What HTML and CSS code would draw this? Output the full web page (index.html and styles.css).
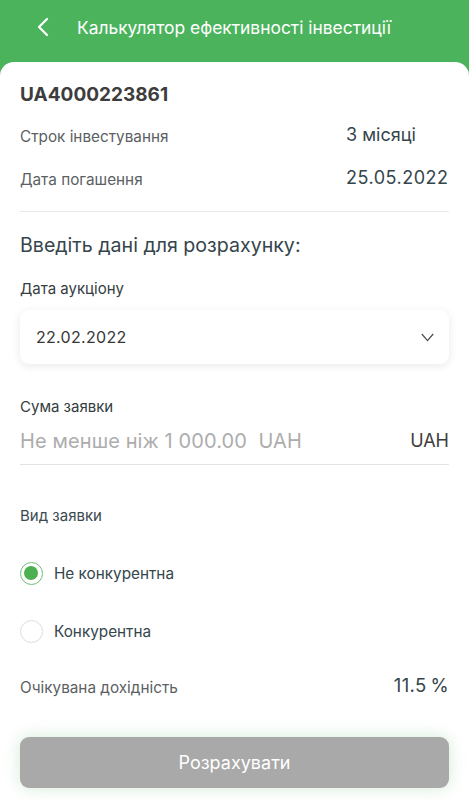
FILE: index.html
```html
<!DOCTYPE html>
<html lang="uk">
<head>
<meta charset="utf-8">
<title>Калькулятор ефективності інвестиції</title>
<link rel="stylesheet" href="styles.css">
</head>
<body>
<header class="topbar">
  <svg class="back" width="14" height="20" viewBox="0 0 14 20"><path d="M11 2 L3 10 L11 18" fill="none" stroke="#fff" stroke-width="2.2" stroke-linecap="round" stroke-linejoin="round"/></svg>
  <h1 class="title">Калькулятор ефективності інвестиції</h1>
</header>
<main class="card">
  <div class="code">UA4000223861</div>
  <div class="info-row"><span class="label">Строк інвестування</span><span class="value">3 місяці</span></div>
  <div class="info-row"><span class="label">Дата погашення</span><span class="value date">25.05.2022</span></div>
  <div class="divider"></div>
  <h2 class="section">Введіть дані для розрахунку:</h2>
  <div class="field-label first">Дата аукціону</div>
  <div class="select">
    <span class="select-value">22.02.2022</span>
    <svg width="13" height="9" viewBox="0 0 13 9"><path d="M0.8 1 L6.5 7.6 L12.2 1" fill="none" stroke="#4a4a4a" stroke-width="1.2"/></svg>
  </div>
  <div class="field-label sum">Сума заявки</div>
  <div class="input-row"><span class="placeholder">Не менше ніж 1 000.00&nbsp; UAH</span><span class="cur">UAH</span></div>
  <div class="field-label kind">Вид заявки</div>
  <div class="radio-row"><span class="radio checked"></span><span class="radio-text">Не конкурентна</span></div>
  <div class="radio-row"><span class="radio"></span><span class="radio-text">Конкурентна</span></div>
  <div class="yield-row"><span class="label">Очікувана дохідність</span><span class="yield">11.5&#8201;%</span></div>
  <button class="btn">Розрахувати</button>
</main>
</body>
</html>
```
FILE: styles.css
```css
html, body {
  margin: 0;
  padding: 0;
}
body {
  background: #4cb35d;
  font-family: Inter, "Noto Sans", sans-serif;
  width: 469px;
  height: 800px;
  overflow: hidden;
}
.topbar {
  height: 62px;
  display: flex;
  align-items: center;
  padding-left: 36px;
  box-sizing: border-box;
  padding-bottom: 8px;
}
.back { flex: none; }
.title {
  margin: 0 0 0 27px;
  font-size: 17.4px;
  font-weight: 400;
  color: #fff;
}
.card {
  background: #fff;
  border-radius: 14px 14px 0 0;
  height: 738px;
  box-sizing: border-box;
  padding: 21px 20px 0;
  display: flex;
  flex-direction: column;
}
.code {
  line-height: 24px;
  font-size: 19px;
  font-weight: 700;
  color: #3d3d3d;
}
.info-row {
  display: flex;
  align-items: center;
  height: 43px;
}
.code + .info-row { margin-top: 7.5px; }
.label {
  font-size: 15.3px;
  color: #5b6062;
  flex: 1;
}
.value {
  width: 103px;
  font-size: 18px;
  color: #34454b;
  margin-top: -4px;
}
.value.date { letter-spacing: 0.5px; }
.divider {
  margin-top: 10.5px;
  height: 1px;
  background: #e8e8e8;
}
.section {
  margin: 20px 0 0;
  font-size: 19.6px;
  font-weight: 400;
  line-height: 26px;
  color: #34454b;
}
.field-label {
  font-size: 15px;
  line-height: 20px;
  color: #353d40;
}
.field-label.first { margin-top: 21px; }
.field-label.sum { margin-top: 33px; }
.field-label.kind { margin-top: 41px; color: #3b4a4f; }
.select {
  margin-top: 11px;
  height: 54px;
  border-radius: 9px;
  box-shadow: 0 2px 10px rgba(0, 0, 0, 0.09);
  display: flex;
  align-items: center;
  justify-content: space-between;
  padding: 0 15px 0 16px;
  font-size: 16px;
  color: #363636;
}
.select-value { letter-spacing: 0.3px; }
.input-row {
  height: 47px;
  border-bottom: 1px solid #e3e3e3;
  display: flex;
  align-items: center;
  justify-content: space-between;
  font-size: 20px;
}
.placeholder { color: #adadad; letter-spacing: 0.1px; }
.cur { color: #3d3d3d; font-size: 18px; }
.radio-row {
  height: 58px;
  display: flex;
  align-items: center;
}
.kind + .radio-row { margin-top: 18px; }
.radio {
  width: 23px;
  height: 23px;
  border-radius: 50%;
  border: 1px solid #ddd;
  box-sizing: border-box;
  position: relative;
  flex: none;
}
.radio.checked {
  border: 1.5px solid #6fbf78;
}
.radio.checked::after {
  content: "";
  position: absolute;
  left: 3px;
  top: 3px;
  width: 14px;
  height: 14px;
  border-radius: 50%;
  background: #4caf50;
}
.radio-text {
  margin-left: 11px;
  font-size: 15.3px;
  color: #34454b;
}
.yield-row {
  margin-top: 15px;
  height: 24px;
  display: flex;
  align-items: center;
}
.yield {
  font-size: 18.5px;
  color: #34454b;
  margin-top: -4px;
  letter-spacing: 0.4px;
}
.btn {
  margin-top: 38px;
  height: 51px;
  border: none;
  border-radius: 9px;
  background: #a9a9a9;
  color: #fff;
  font-family: inherit;
  font-size: 18px;
  box-shadow: 0 0 16px rgba(76, 179, 93, 0.25);
  width: 100%;
}
```
